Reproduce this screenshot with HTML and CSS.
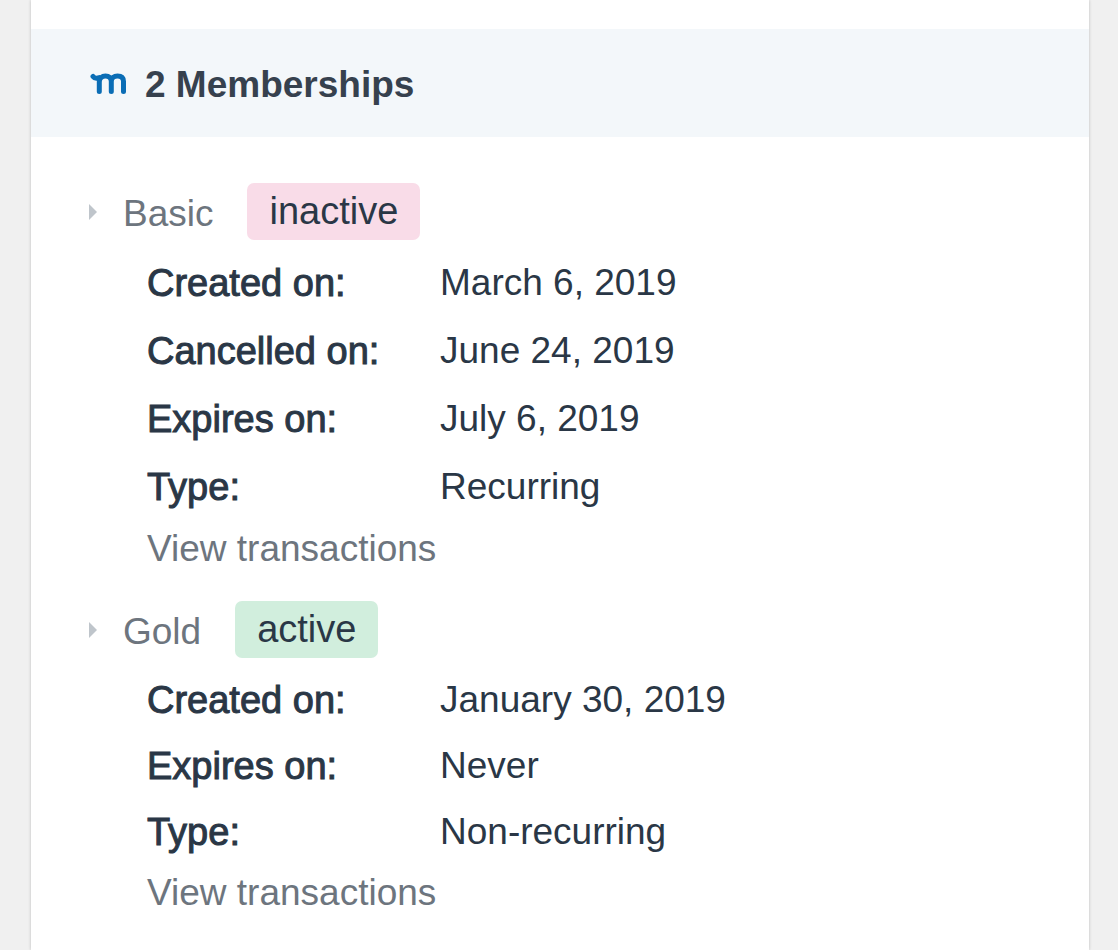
FILE: index.html
```html
<!DOCTYPE html>
<html lang="en">
<head>
<meta charset="utf-8">
<meta name="viewport" content="width=device-width, initial-scale=1">
<title>Memberships</title>
<link rel="stylesheet" href="styles.css">
</head>
<body>
<main class="panel">
  <header class="panel-header">
    <svg class="logo" viewBox="0 0 38 24" aria-hidden="true">
      <path d="M4 5.500C5.500 7.500 8 7.500 10.500 6.500M10.300 20.500V11C10.300 7 13 5 16.500 5C20 5 22.300 7 22.300 10.500V20.500M22.300 10.500C22.300 7 25 5 28.500 5C32.500 5 34.500 7 34.500 10.500V20.500"/>
    </svg>
    <h1 class="panel-title">2 Memberships</h1>
  </header>
  <div class="memberships">
    <details class="membership membership-roomy" open>
      <summary class="membership-summary">
        <svg class="arrow" viewBox="0 0 8 16" aria-hidden="true"><path d="M0 0L8 8L0 16Z"/></svg>
        <span class="membership-name">Basic</span>
        <span class="badge badge-inactive">inactive</span>
      </summary>
      <div class="membership-body">
        <dl class="facts">
          <dt>Created on:</dt><dd>March 6, 2019</dd>
          <dt>Cancelled on:</dt><dd>June 24, 2019</dd>
          <dt>Expires on:</dt><dd>July 6, 2019</dd>
          <dt>Type:</dt><dd>Recurring</dd>
        </dl>
        <a class="transactions" href="#basic">View transactions</a>
      </div>
    </details>
    <details class="membership" open>
      <summary class="membership-summary">
        <svg class="arrow" viewBox="0 0 8 16" aria-hidden="true"><path d="M0 0L8 8L0 16Z"/></svg>
        <span class="membership-name">Gold</span>
        <span class="badge badge-active">active</span>
      </summary>
      <div class="membership-body">
        <dl class="facts">
          <dt>Created on:</dt><dd>January 30, 2019</dd>
          <dt>Expires on:</dt><dd>Never</dd>
          <dt>Type:</dt><dd>Non-recurring</dd>
        </dl>
        <a class="transactions" href="#gold">View transactions</a>
      </div>
    </details>
  </div>
</main>
</body>
</html>
```

FILE: styles.css
```css
* {
  box-sizing: border-box;
}

body {
  margin: 0;
  background: #f0f0f0;
  color: #2a3746;
  font-family: "Liberation Sans", Arial, sans-serif;
  font-size: 37px;
  line-height: 44px;
}

.panel {
  min-height: 100vh;
  margin: 0 29px 0 31px;
  padding-top: 29px;
  background: #fff;
  box-shadow: 0 0 3px rgba(0, 0, 0, 0.22);
}

.panel-header {
  display: flex;
  align-items: center;
  gap: 18px;
  padding: 30px 58px;
  background: #f3f7fa;
}

.logo {
  width: 38px;
  height: 24px;
  fill: none;
  stroke: #0a6db5;
  stroke-width: 5;
  stroke-linecap: round;
  stroke-linejoin: round;
}

.panel-title {
  margin: 0;
  padding-top: 4px;
  color: #36414e;
  font-size: 37px;
  font-weight: 700;
}

.memberships {
  display: flex;
  flex-direction: column;
  gap: 30px;
  padding: 46px 58px 22px;
}

.membership-summary {
  display: flex;
  align-items: center;
  cursor: pointer;
  list-style: none;
}

.arrow {
  width: 8px;
  height: 16px;
  margin-right: 26px;
  fill: #bfc5cb;
}

.membership-name {
  margin-right: 34px;
  padding-top: 4px;
  color: #6d757e;
}

.badge {
  padding: 6px 22px 7px;
  border-radius: 7px;
  font-size: 38px;
}

.badge-inactive {
  background: #f9dce8;
}

.badge-active {
  background: #d1eedd;
}

.membership-body {
  padding: 9px 0 0 58px;
}

.facts {
  display: grid;
  grid-template-columns: 293px 1fr;
  grid-auto-rows: minmax(66px, auto);
  align-items: center;
  margin: 0;
}

.membership-roomy .facts {
  grid-auto-rows: minmax(68px, auto);
}

.facts dt {
  font-size: 38px;
  -webkit-text-stroke: 1px currentColor;
}

.facts dd {
  margin: 0;
}

.transactions {
  display: block;
  width: fit-content;
  margin-top: 6px;
  color: #6d757e;
  text-decoration: none;
}
```
